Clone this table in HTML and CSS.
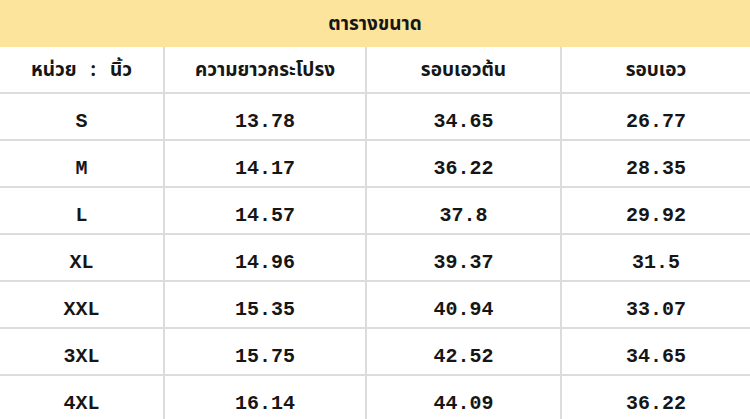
FILE: index.html
```html
<!DOCTYPE html>
<html lang="th">
<head>
<meta charset="utf-8">
<title>ตารางขนาด</title>
<link rel="stylesheet" href="styles.css">
</head>
<body>
<div class="chart">
  <div class="title">ตารางขนาด</div>
  <div class="grid">
    <div class="cell head">หน่วย<span class="colon">:</span>นิ้ว</div>
    <div class="cell head">ความยาวกระโปรง</div>
    <div class="cell head">รอบเอวต้น</div>
    <div class="cell head last">รอบเอว</div>

    <div class="cell num">S</div><div class="cell num">13.78</div><div class="cell num">34.65</div><div class="cell num last">26.77</div>
    <div class="cell num">M</div><div class="cell num">14.17</div><div class="cell num">36.22</div><div class="cell num last">28.35</div>
    <div class="cell num">L</div><div class="cell num">14.57</div><div class="cell num">37.8</div><div class="cell num last">29.92</div>
    <div class="cell num">XL</div><div class="cell num">14.96</div><div class="cell num">39.37</div><div class="cell num last">31.5</div>
    <div class="cell num">XXL</div><div class="cell num">15.35</div><div class="cell num">40.94</div><div class="cell num last">33.07</div>
    <div class="cell num">3XL</div><div class="cell num">15.75</div><div class="cell num">42.52</div><div class="cell num last">34.65</div>
    <div class="cell num">4XL</div><div class="cell num">16.14</div><div class="cell num">44.09</div><div class="cell num last">36.22</div>
  </div>
</div>
</body>
</html>
```

FILE: styles.css
```css
html, body {
  margin: 0;
  padding: 0;
  background: #ffffff;
}
body {
  width: 750px;
  height: 419px;
  overflow: hidden;
  color: #161616;
  font-family: "Noto Sans Thai", "Noto Sans", "DejaVu Sans", sans-serif;
}
.title {
  height: 47px;
  background: #fde49c;
  display: flex;
  align-items: center;
  justify-content: center;
  font-weight: bold;
  font-size: 19px;
  padding-top: 2px;
  box-sizing: border-box;
}
.grid {
  display: grid;
  grid-template-columns: 165px 202px 195px 188px;
  grid-auto-rows: 47px;
}
.cell {
  display: flex;
  align-items: center;
  justify-content: center;
  border-right: 2px solid #dcdcdc;
  border-bottom: 2px solid #dcdcdc;
  box-sizing: border-box;
}
.cell.last {
  border-right: none;
}
.head {
  font-weight: bold;
  font-size: 19px;
  padding-top: 1px;
}
.colon {
  margin: 0 14px;
}
.num {
  font-family: "Liberation Mono", "DejaVu Sans Mono", monospace;
  font-weight: bold;
  font-size: 20px;
  padding-top: 9px;
}
```
